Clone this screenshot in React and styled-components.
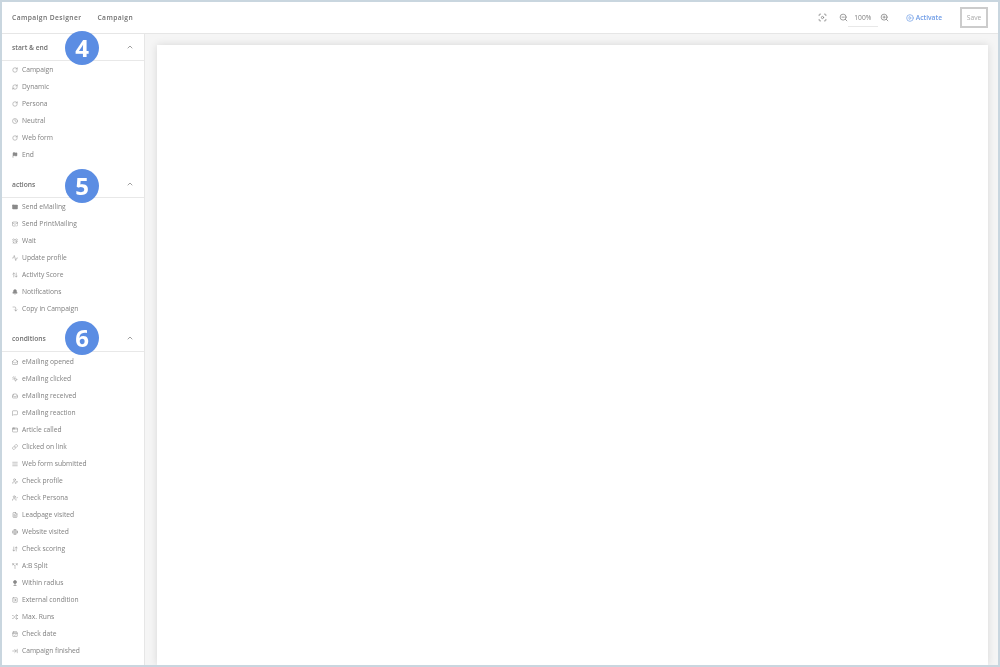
import * as React from "react";
import styled, { createGlobalStyle } from "styled-components";
import {
  RotateCw, RefreshCw, Clock, Flag, Mail, MailCheck, AlarmClock, Activity, ArrowUpDown, Bell, CornerRightDown,
  MailOpen, MousePointerClick, Inbox, MessageSquare, AppWindow, Link, AlignJustify, UserPen, UserCheck, FileText,
  Globe, ArrowDownUp, Split, SquareArrowRight, Shuffle, CalendarCheck, ArrowRightToLine, ChevronUp, ZoomIn, ZoomOut,
  Focus, CirclePlay,
} from "lucide-react";

const PinIcon = () => (
  <svg width="6" height="6" viewBox="0 0 24 24" fill="currentColor" stroke="currentColor" strokeWidth="3">
    <circle cx="12" cy="8" r="6" />
    <path d="M12 14v6M6 22h12" fill="none" />
  </svg>
);

const sections = [
  {
    title: "start & end",
    badge: 4,
    top: -3,
    items: [
      ["Campaign", RotateCw],
      ["Dynamic", RefreshCw],
      ["Persona", RotateCw],
      ["Neutral", Clock],
      ["Web form", RotateCw],
      ["End", Flag, true],
    ],
  },
  {
    title: "actions",
    badge: 5,
    top: -2,
    items: [
      ["Send eMailing", Mail, true],
      ["Send PrintMailing", MailCheck],
      ["Wait", AlarmClock],
      ["Update profile", Activity],
      ["Activity Score", ArrowUpDown],
      ["Notifications", Bell, true],
      ["Copy in Campaign", CornerRightDown],
    ],
  },
  {
    title: "conditions",
    badge: 6,
    top: -4,
    listGap: 1,
    items: [
      ["eMailing opened", MailOpen],
      ["eMailing clicked", MousePointerClick],
      ["eMailing received", Inbox],
      ["eMailing reaction", MessageSquare],
      ["Article called", AppWindow],
      ["Clicked on link", Link],
      ["Web form submitted", AlignJustify],
      ["Check profile", UserPen],
      ["Check Persona", UserCheck],
      ["Leadpage visited", FileText],
      ["Website visited", Globe],
      ["Check scoring", ArrowDownUp],
      ["A:B Split", Split],
      ["Within radius", PinIcon],
      ["External condition", SquareArrowRight],
      ["Max. Runs", Shuffle],
      ["Check date", CalendarCheck],
      ["Campaign finished", ArrowRightToLine],
    ],
  },
];

const GlobalStyle = createGlobalStyle`
  html, body {
    margin: 0;
    padding: 0;
    background: #fff;
  }
`;

const Frame = styled.div`
  box-sizing: border-box;
  width: 1000px;
  height: 667px;
  border: 2px solid #c9d6df;
  display: flex;
  flex-direction: column;
  overflow: hidden;
  font-family: "Open Sans", sans-serif;
  color: #6f6f6f;
  will-change: transform;
`;

const TopBar = styled.header`
  box-sizing: border-box;
  height: 32px;
  flex: none;
  display: flex;
  align-items: center;
  padding: 0 10px;
  background: #fff;
  border-bottom: 1px solid #e6e6e6;
`;

const Crumb = styled.span`
  font-size: 6.7px;
  font-weight: 600;
  letter-spacing: 0.4px;
  color: #707070;
  margin-right: 16px;
`;

const Tools = styled.div`
  margin-left: auto;
  display: flex;
  align-items: center;
  color: #808080;
`;

const ZoomValue = styled.span`
  box-sizing: border-box;
  width: 30px;
  margin-right: 2px;
  padding: 4px 0;
  border-bottom: 1px solid #e8e8e8;
  text-align: center;
  font-size: 6.7px;
  color: #808080;
`;

const Activate = styled.span`
  display: flex;
  align-items: center;
  gap: 2px;
  margin: 0 18px 0 17px;
  font-size: 6.7px;
  font-weight: 600;
  color: #6d9be6;
`;

const SaveButton = styled.button`
  box-sizing: border-box;
  width: 28px;
  height: 21px;
  padding: 0;
  background: #fff;
  border: 2px solid #cccccc;
  font: 6.7px "Open Sans", sans-serif;
  color: #aaa;
`;

const Body = styled.div`
  flex: 1;
  min-height: 0;
  display: flex;
`;

const Sidebar = styled.aside`
  box-sizing: border-box;
  width: 143px;
  flex: none;
  background: #fff;
  border-right: 1px solid #e6e6e6;
`;

const Section = styled.section`
  position: relative;
  margin-bottom: 8px;
`;

const SectionHead = styled.div`
  box-sizing: border-box;
  height: 27px;
  display: flex;
  align-items: center;
  justify-content: space-between;
  padding: 0 10px 0 10px;
  border-bottom: 1px solid #e8e8e8;
  font-size: 6.7px;
  font-weight: 600;
  color: #707070;
`;

const Badge = styled.span`
  position: absolute;
  left: 63px;
  top: ${(p) => p.$top}px;
  width: 34px;
  height: 34px;
  border-radius: 50%;
  background: #5b8de3;
  color: #fff;
  font: 700 24px/34px "Open Sans", sans-serif;
  text-align: center;
`;

const ItemList = styled.div`
  padding-top: ${(p) => p.$gap || 0}px;
`;

const Row = styled.div`
  height: 17px;
  display: flex;
  align-items: center;
  gap: 3px;
  padding-left: 10px;
  font-size: 6.7px;
  color: #808080;
`;

const RowIcon = styled.span`
  display: flex;
  width: 7px;
  color: #8a8a8a;
`;

const Canvas = styled.main`
  flex: 1;
  min-width: 0;
  display: flex;
  padding: 11px 10px 0 12px;
  background: #f5f5f5;
`;

const Paper = styled.div`
  flex: 1;
  background: #fff;
  box-shadow: 0 0 8px rgba(0, 0, 0, 0.12);
`;

const ZoomOutIcon = styled(ZoomOut)`
  margin-left: 12px;
`;

function App() {
  return (
    <Frame>
      <GlobalStyle />
      <TopBar>
        <Crumb>Campaign Designer</Crumb>
        <Crumb>Campaign</Crumb>
        <Tools>
          <Focus size={9} strokeWidth={2} />
          <ZoomOutIcon size={9} />
          <ZoomValue>100%</ZoomValue>
          <ZoomIn size={9} />
          <Activate>
            <CirclePlay size={8} />
            Activate
          </Activate>
          <SaveButton>Save</SaveButton>
        </Tools>
      </TopBar>
      <Body>
        <Sidebar>
          {sections.map((section) => (
            <Section key={section.title}>
              <SectionHead>
                {section.title}
                <ChevronUp size={8} strokeWidth={2} />
              </SectionHead>
              <Badge $top={section.top}>{section.badge}</Badge>
              <ItemList $gap={section.listGap}>
                {section.items.map(([label, Icon, solid]) => (
                  <Row key={label}>
                    <RowIcon>
                      <Icon size={6} strokeWidth={2} fill={solid ? "currentColor" : "none"} />
                    </RowIcon>
                    {label}
                  </Row>
                ))}
              </ItemList>
            </Section>
          ))}
        </Sidebar>
        <Canvas>
          <Paper />
        </Canvas>
      </Body>
    </Frame>
  );
}

export default App;
